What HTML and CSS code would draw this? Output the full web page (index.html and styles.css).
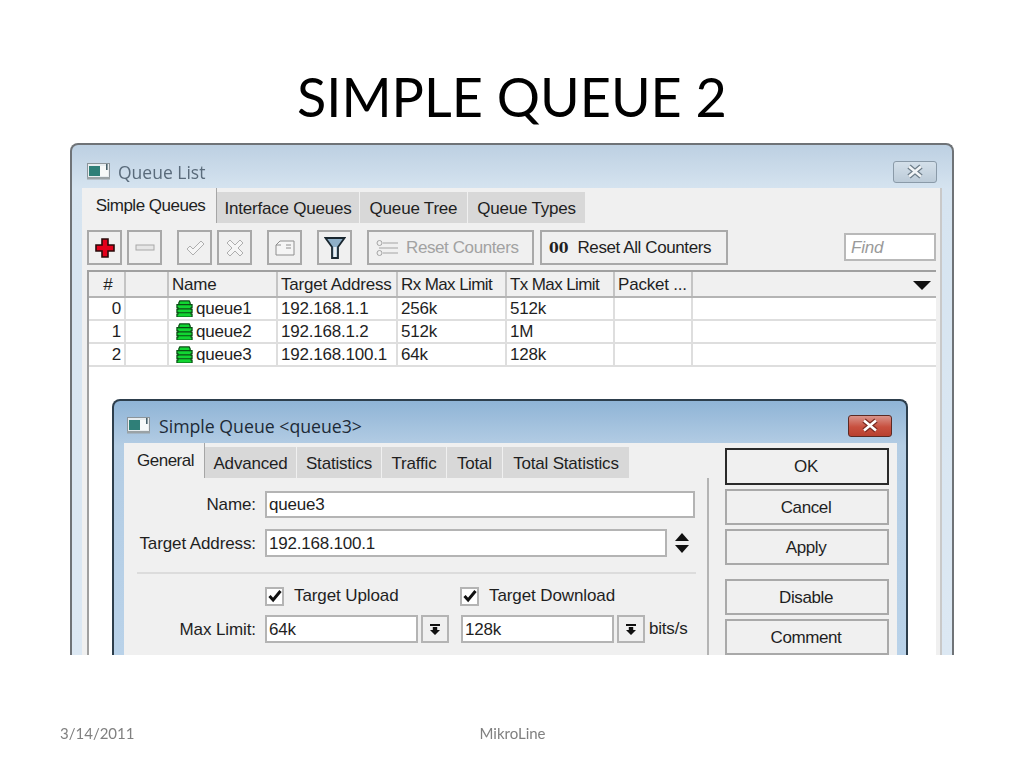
FILE: index.html
```html
<!DOCTYPE html>
<html lang="en">
<head>
<meta charset="utf-8">
<title>Simple Queue 2</title>
<link rel="stylesheet" href="styles.css">
</head>
<body>
<svg class="defs" width="0" height="0" aria-hidden="true">
  <symbol id="winicon" viewBox="0 0 24 17">
    <rect x="0.5" y="0.5" width="22" height="15" fill="#e8edf0" stroke="#8b949a"/>
    <rect x="2" y="3" width="11" height="10" fill="#2f7f78"/>
    <rect x="13" y="3" width="8" height="10" fill="#f7f9f9"/>
    <rect x="19" y="1" width="1.6" height="6" fill="#48606a"/>
    <rect x="0" y="14" width="23" height="2.5" fill="#9aa2a6"/>
  </symbol>
  <symbol id="queue" viewBox="0 0 18 18">
    <path d="M4 1h10l1 2v2h2v3h-1v2h1v3h-1v2h1v3H1v-3h1v-2H1v-3h1V8H1V5h2V3z" fill="#12d632" stroke="#0a4d14" stroke-width="1.3"/>
    <path d="M3 5h12M2 9.500h14M2 13.500h14" stroke="#0a4d14" stroke-width="1.300"/>
  </symbol>
  <symbol id="stepdown" viewBox="0 0 14 14">
    <rect x="2" y="2" width="10" height="2" fill="#111"/>
    <path d="M4.800 5v3H2l5 5 5-5H9.200V5z" fill="#111"/>
  </symbol>
  <symbol id="check" viewBox="0 0 14 14">
    <path d="M1.500 7l3.600 4 7.400-9" fill="none" stroke="#111" stroke-width="3"/>
  </symbol>
</svg>

<main class="slide">
  <h1 class="title">SIMPLE QUEUE 2</h1>

  <div class="shot">
    <section class="win win-outer">
      <header class="bar">
        <svg class="winicon"><use href="#winicon"/></svg>
        <span class="bar-title bar-title-dim">Queue List</span>
        <span class="close close-dim">
          <svg width="20" height="15" viewBox="0 0 20 15"><path d="M4 2.500L16 12.500M16 2.500L4 12.500" stroke="#6d7d89" stroke-width="5"/><path d="M4 2.500L16 12.500M16 2.500L4 12.500" stroke="#f2f5f7" stroke-width="2.600"/></svg>
        </span>
      </header>
      <div class="panel">
        <nav class="tabs tabs-outer">
          <span class="tab tab-on tw-simple">Simple Queues</span>
          <span class="tab tw-iface">Interface Queues</span>
          <span class="tab tw-tree">Queue Tree</span>
          <span class="tab tw-types">Queue Types</span>
        </nav>
        <div class="toolbar">
          <span class="tool">
            <svg width="22" height="22" viewBox="0 0 22 22"><path d="M8 2h6v6h6v6h-6v6H8v-6H2V8h6z" fill="#e3001b" stroke="#2a0a0a" stroke-width="1.6"/></svg>
          </span>
          <span class="tool">
            <svg width="20" height="8" viewBox="0 0 20 8"><rect x="1" y="1" width="18" height="5" fill="#e6e6e6" stroke="#a8a8a8"/></svg>
          </span>
          <span class="tool gap-l">
            <svg width="20" height="20" viewBox="0 0 20 20"><path d="M2 11l3-3 3 3 8-8 3 3-11 11z" fill="#f5f5f5" stroke="#aeaeae"/></svg>
          </span>
          <span class="tool">
            <svg width="20" height="20" viewBox="0 0 20 20"><path d="M5 2l5 5 5-5 3 3-5 5 5 5-3 3-5-5-5 5-3-3 5-5-5-5z" fill="#f5f5f5" stroke="#aeaeae"/></svg>
          </span>
          <span class="tool gap-l">
            <svg width="20" height="16" viewBox="0 0 20 16"><path d="M1 5l4-4h14v14H1z" fill="#f5f5f5" stroke="#8e8e8e"/><path d="M1 5h5M11 5h5M11 8h5" stroke="#8e8e8e"/></svg>
          </span>
          <span class="tool gap-l">
            <svg width="22" height="24" viewBox="0 0 22 24"><path d="M1.500 2h19l-6.500 9v11h-6V11z" fill="#8fb0c8" stroke="#1a2730" stroke-width="1.800"/><path d="M9.500 11h3v10h-3z" fill="#e8eef2"/></svg>
          </span>
          <span class="tool tool-wide w-reset gap-l muted">
            <svg width="22" height="18" viewBox="0 0 22 18"><g fill="none" stroke="#a4a4a4"><circle cx="3.500" cy="4" r="2.500"/><circle cx="3.500" cy="14" r="2.500"/><path d="M7 4h15M7 14h15M3 9h19"/></g></svg>
            Reset Counters
          </span>
          <span class="tool tool-wide w-resetall">
            <b class="zeros">00</b> Reset All Counters
          </span>
          <span class="find">Find</span>
        </div>
        <div class="table">
          <div class="row row-head">
            <span class="cell num center">#</span><span class="cell"></span><span class="cell">Name</span><span class="cell">Target Address</span><span class="cell tight">Rx Max Limit</span><span class="cell tight">Tx Max Limit</span><span class="cell">Packet ...</span>
            <span class="cell sort"><svg width="18" height="9" viewBox="0 0 18 9"><path d="M0 0h18L9 9z" fill="#111"/></svg></span>
          </div>
          <div class="row">
            <span class="cell num">0</span><span class="cell"></span><span class="cell name"><svg class="q"><use href="#queue"/></svg>queue1</span><span class="cell">192.168.1.1</span><span class="cell">256k</span><span class="cell">512k</span><span class="cell"></span><span class="cell"></span>
          </div>
          <div class="row">
            <span class="cell num">1</span><span class="cell"></span><span class="cell name"><svg class="q"><use href="#queue"/></svg>queue2</span><span class="cell">192.168.1.2</span><span class="cell">512k</span><span class="cell">1M</span><span class="cell"></span><span class="cell"></span>
          </div>
          <div class="row">
            <span class="cell num">2</span><span class="cell"></span><span class="cell name"><svg class="q"><use href="#queue"/></svg>queue3</span><span class="cell">192.168.100.1</span><span class="cell">64k</span><span class="cell">128k</span><span class="cell"></span><span class="cell"></span>
          </div>
        </div>
      </div>
    </section>

    <section class="win win-inner">
      <header class="bar bar-inner">
        <svg class="winicon"><use href="#winicon"/></svg>
        <span class="bar-title bar-title-strong">Simple Queue &lt;queue3&gt;</span>
        <span class="close close-red">
          <svg width="20" height="15" viewBox="0 0 20 15"><path d="M4 2.500L16 12.500M16 2.500L4 12.500" stroke="#7b2a22" stroke-width="5"/><path d="M4 2.500L16 12.500M16 2.500L4 12.500" stroke="#fff" stroke-width="2.600"/></svg>
        </span>
      </header>
      <div class="panel panel-inner">
        <div class="form-side">
          <nav class="tabs tabs-inner">
            <span class="tab tab-on tw-general">General</span>
            <span class="tab tw-adv">Advanced</span>
            <span class="tab tw-stat">Statistics</span>
            <span class="tab tw-traf">Traffic</span>
            <span class="tab tw-total">Total</span>
            <span class="tab tw-tstat">Total Statistics</span>
          </nav>
          <div class="form">
            <div class="frow frow-name">
              <span class="lbl">Name:</span>
              <span class="input w-name">queue3</span>
            </div>
            <div class="frow frow-addr">
              <span class="lbl">Target Address:</span>
              <span class="input w-addr">192.168.100.1</span>
              <svg class="updown" width="16" height="22" viewBox="0 0 16 22"><path d="M8 1l7 8H1zM8 21l-7-8h14z" fill="#111"/></svg>
            </div>
            <hr class="sep">
            <div class="frow frow-checks">
              <span class="lbl"></span>
              <span class="chk w-chk1"><span class="box"><svg width="14" height="14"><use href="#check"/></svg></span>Target Upload</span>
              <span class="chk"><span class="box"><svg width="14" height="14"><use href="#check"/></svg></span>Target Download</span>
            </div>
            <div class="frow frow-limit">
              <span class="lbl">Max Limit:</span>
              <span class="input w-lim">64k</span>
              <span class="step"><svg width="14" height="14"><use href="#stepdown"/></svg></span>
              <span class="input w-lim l-second">128k</span>
              <span class="step"><svg width="14" height="14"><use href="#stepdown"/></svg></span>
              <span class="unit">bits/s</span>
            </div>
          </div>
        </div>
        <div class="actions">
          <span class="btn btn-default">OK</span>
          <span class="btn">Cancel</span>
          <span class="btn">Apply</span>
          <span class="btn btn-gap">Disable</span>
          <span class="btn">Comment</span>
        </div>
      </div>
    </section>
  </div>

  <footer class="foot">
    <span class="foot-date">3/14/2011</span>
    <span class="foot-mid">MikroLine</span>
  </footer>
</main>
</body>
</html>
```

FILE: styles.css
```css
* { box-sizing: border-box; }
html, body { margin: 0; padding: 0; background: #fff; }
.defs { position: absolute; }

.slide {
  width: 1024px;
  height: 768px;
  overflow: hidden;
  display: flex;
  flex-direction: column;
  font-family: "Liberation Sans", Arial, sans-serif;
  color: #1f1f1f;
}

.title {
  margin: 0;
  height: 143px;
  padding-top: 62px;
  text-align: center;
  font: 400 54px/70px Lato, "Open Sans", sans-serif;
  color: #000;
}

.shot {
  position: relative;
  width: 884px;
  height: 512px;
  margin-left: 70px;
  overflow: hidden;
  font-size: 17px;
  letter-spacing: -0.2px;
  filter: blur(0.45px);
}

.win {
  background: linear-gradient(#bdd0e2 0, #d6e4f0 45px, #dce8f3 100%);
  border: 2px solid #5f6468;
  border-bottom: 0;
  border-radius: 8px 8px 0 0;
  display: flex;
  flex-direction: column;
}
.win-outer { height: 512px; border-color: #6f7377; }
.win-inner {
  position: absolute;
  left: 42px;
  top: 256px;
  width: 796px;
  height: 256px;
  background: linear-gradient(#8fb4d6 0, #b4cde4 45px, #b9d2e9 100%);
  border-color: #2d3e4c;
}

.bar {
  height: 43px;
  flex: none;
  display: flex;
  align-items: center;
  padding: 10px 15px 0 15px;
}
.bar-inner { height: 42px; padding: 7px 14px 0 13px; }
.winicon { width: 24px; height: 17px; flex: none; }
.bar-title {
  margin-left: 7px;
  font: 400 17.5px/20px "Open Sans", sans-serif;
  letter-spacing: 0;
  color: #1d2a36;
}
.bar-title-dim { color: #5a6b7b; }
.bar-title-strong { margin-left: 8px; font-size: 17.7px; }

.close {
  margin-left: auto;
  width: 44px;
  height: 22px;
  display: flex;
  align-items: center;
  justify-content: center;
  border-radius: 3px;
}
.close-dim { border: 1px solid #8a9aa8; background: linear-gradient(#d4e0ea, #bccbd8); }
.close-red { border: 1px solid #5b2a24; background: linear-gradient(#d9938a 0, #c8503f 55%, #b8402f 100%); }

.panel {
  flex: 1;
  min-height: 0;
  margin: 0 10px;
  background: #f0f0f0;
  display: flex;
  flex-direction: column;
  border-right: 2px solid #c9c9c9;
}
.panel-inner { flex-direction: row; border-right: 0; margin: 0 9px 0 10px; }

.tabs { display: flex; align-items: flex-end; flex: none; height: 35px; padding-left: 3px; }
.tab {
  height: 31px;
  padding-top: 3px;
  display: flex;
  align-items: center;
  justify-content: center;
  background: #d8d8d8;
  border-right: 1px solid #f0f0f0;
}
.tab-on { height: 35px; background: #f0f0f0; border-right: 1px solid #a6a6a6; padding-top: 0; letter-spacing: -0.5px; }

.tw-simple { width: 132px; }
.tw-iface { width: 143px; }
.tw-tree { width: 108px; }
.tw-types { width: 118px; }
.tw-general { width: 78px; }
.tw-adv { width: 92px; }
.tw-stat { width: 85px; }
.tw-traf { width: 65px; }
.tw-total { width: 56px; }
.tw-tstat { width: 127px; }

.toolbar {
  flex: none;
  height: 47px;
  padding: 7px 4px 5px 5px;
  display: flex;
  align-items: flex-start;
  gap: 5px;
}
.tool {
  width: 35px;
  height: 35px;
  flex: none;
  border: 2px solid #a9a9a9;
  display: flex;
  align-items: center;
  justify-content: center;
  white-space: nowrap;
}
.gap-l { margin-left: 10px; }
.tool-wide { justify-content: flex-start; padding-left: 7px; letter-spacing: -0.4px; }
.w-reset { width: 167px; gap: 8px; }
.w-resetall { width: 188px; margin-left: 1px; gap: 9px; }
.muted { color: #a2a2a2; }
.zeros { font-family: "DejaVu Serif", serif; font-size: 14px; letter-spacing: 0; }
.find {
  margin: 3px 0 0 auto;
  width: 92px;
  height: 28px;
  border: 2px solid #b9b9b9;
  background: #fff;
  padding: 3px 5px;
  font-style: italic;
  color: #9a9a9a;
}

.table {
  flex: 1;
  margin: 0 4px 0 5px;
  background: #fff;
  border-left: 2px solid #a0a0a0;
  border-top: 2px solid #a0a0a0;
}
.row {
  display: grid;
  grid-template-columns: 37px 43px 109px 120px 109px 108px 78px 1fr;
  height: 23px;
  border-bottom: 2px solid #dedede;
}
.row-head { height: 26px; background: #f0f0f0; border-bottom: 2px solid #b4b4b4; }
.cell {
  padding: 0 3px;
  border-right: 2px solid #dedede;
  line-height: 21px;
  white-space: nowrap;
  overflow: hidden;
}
.row-head .cell { line-height: 26px; border-right-color: #c4c4c4; }
.row-head .tight { letter-spacing: -0.6px; }
.cell:last-child { border-right: 0; }
.num { text-align: right; padding-right: 3px; }
.center { text-align: center; padding: 0 0 0 3px; }
.sort { display: flex; align-items: center; justify-content: flex-end; padding: 2px 5px 0 0; }
.name { display: flex; align-items: center; padding-left: 6px; gap: 3px; }
.q { width: 17px; height: 17px; flex: none; margin-left: 1px; }

.form-side { width: 585px; flex: none; display: flex; flex-direction: column; }
.form {
  flex: 1;
  border-right: 2px solid #b4b4b4;
  padding-top: 13px;
}
.tabs-inner { padding-left: 3px; }
.frow { display: flex; align-items: center; }
.lbl { width: 141px; flex: none; text-align: right; padding: 1px 9px 0 0; letter-spacing: -0.1px; }
.frow-name { height: 27px; }
.frow-addr { height: 28px; margin-top: 11px; }
.frow-checks { height: 20px; margin-top: 12px; }
.frow-limit { height: 28px; margin-top: 9px; }
.input {
  height: 100%;
  flex: none;
  background: #fff;
  border: 2px solid #b4b4b4;
  padding: 1px 2px 0;
  display: flex;
  align-items: center;
}
.w-name { width: 430px; }
.w-addr { width: 402px; }
.w-lim { width: 153px; }
.l-second { margin-left: 12px; }
.updown { margin-left: 7px; flex: none; }
.sep { margin: 15px 11px 0 13px; width: 559px; height: 2px; border: 0; background: #dcdcdc; }

.chk { display: flex; align-items: center; gap: 10px; letter-spacing: -0.1px; }
.w-chk1 { width: 195px; }
.box {
  width: 19px;
  height: 19px;
  background: #fff;
  border: 2px solid #b4b4b4;
  display: flex;
  align-items: center;
  justify-content: center;
}
.step {
  width: 28px;
  height: 100%;
  margin-left: 3px;
  flex: none;
  border: 2px solid #b4b4b4;
  display: flex;
  align-items: center;
  justify-content: center;
}
.unit { margin-left: 4px; }

.actions {
  margin-left: 16px;
  width: 164px;
  padding-top: 5px;
  display: flex;
  flex-direction: column;
  gap: 4px;
}
.btn {
  height: 36px;
  flex: none;
  padding: 1px 2px 0 0;
  border: 2px solid #a9a9a9;
  letter-spacing: -0.4px;
  display: flex;
  align-items: center;
  justify-content: center;
}
.btn-default { height: 37px; border-color: #2a2a2a; }
.btn-gap { margin-top: 10px; }

.foot {
  position: relative;
  height: 113px;
  font: 400 15px/18px Lato, "Open Sans", sans-serif;
  color: #808080;
}
.foot-date { position: absolute; left: 60px; top: 69px; }
.foot-mid { position: absolute; left: 0; width: 100%; top: 69px; text-align: center; padding-left: 1px; }
```
